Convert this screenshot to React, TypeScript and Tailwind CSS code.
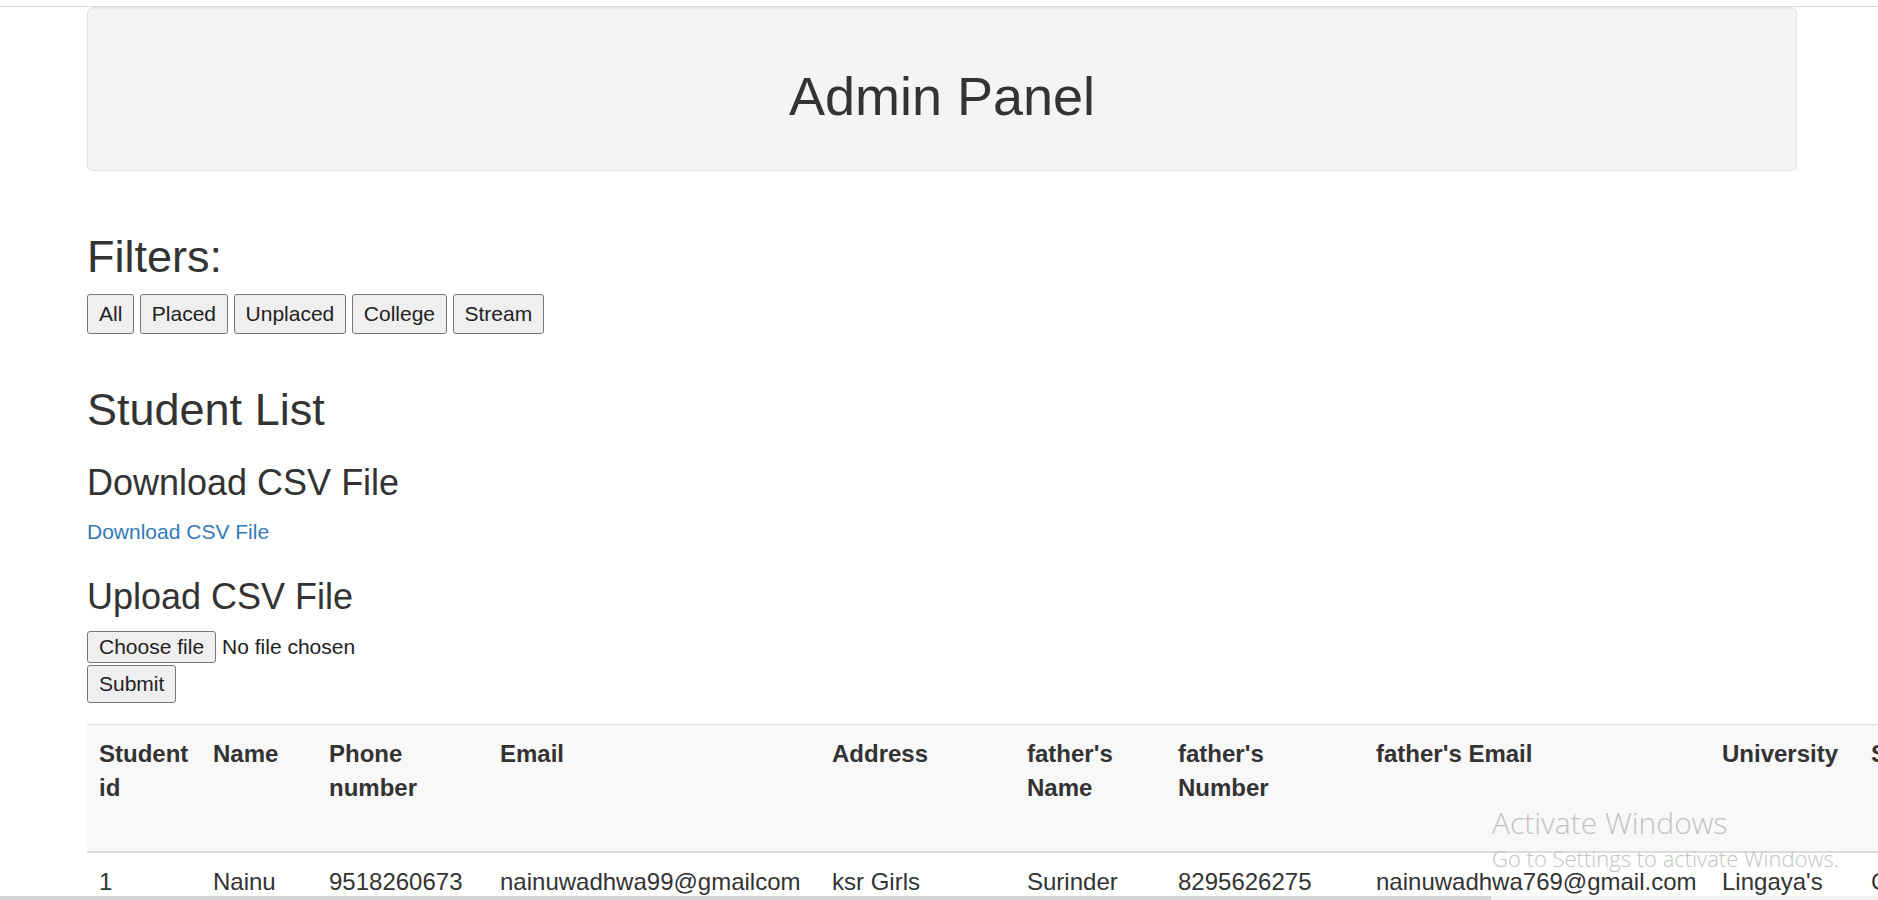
const filters = ["All", "Placed", "Unplaced", "College", "Stream"];

const columns = [
  { w: "w-[114px]", head: ["Student", "id"] },
  { w: "w-[116px]", head: ["Name"] },
  { w: "w-[171px]", head: ["Phone", "number"] },
  { w: "w-[332px]", head: ["Email"] },
  { w: "w-[195px]", head: ["Address"] },
  { w: "w-[151px]", head: ["father's", "Name"] },
  { w: "w-[198px]", head: ["father's", "Number"] },
  { w: "w-[346px]", head: ["father's Email"] },
  { w: "w-[149px]", head: ["University"] },
  { w: "w-[120px]", head: ["Stream"] },
  { w: "w-[150px]", head: ["Year of", "passing", "out"] },
  { w: "w-[150px]", head: ["Status"] },
];

const students = [
  ["1", "Nainu", "9518260673", "nainuwadhwa99@gmailcom", "ksr Girls", "Surinder", "8295626275", "nainuwadhwa769@gmail.com", "Lingaya's", "CSE", "2020", "Placed"],
  ["2", "Riya", "9812345670", "riya.sharma@gmail.com", "Sector 15", "Rakesh", "9876543210", "rakesh.sharma@gmail.com", "MDU", "ECE", "2021", "Unplaced"],
];

const Btn = ({ label, h }: { label: string; h: string }) => (
  <button className={`${h} px-[11px] border border-[#767676] rounded-[3px] bg-[#efefef] text-[21px] leading-[30px] text-[#222]`}>
    {label}
  </button>
);

export default function App() {
  return (
    <div className="relative w-full h-screen overflow-hidden bg-white font-['Liberation_Sans',Arial,sans-serif] text-[#333]">
      <div className="mt-[6px] border-t border-[#dcdcdc]">
        <div className="pl-[87px]">
          {/* header well */}
          <div className="w-[1710px] h-[164px] pt-[58px] bg-[#f4f4f4] border border-[#e3e3e3] rounded-[6px] shadow-[inset_0_1px_1px_rgba(0,0,0,0.05)]">
            <h1 className="text-center text-[54px] leading-[60px]">Admin Panel</h1>
          </div>

          <h2 className="mt-[61px] text-[45px] leading-[50px]">Filters:</h2>
          <div className="mt-[12px] flex gap-[5.5px]">
            {filters.map((f) => (
              <Btn key={f} label={f} h="h-[40px]" />
            ))}
          </div>

          <h2 className="mt-[51px] text-[45px] leading-[50px]">Student List</h2>
          <h3 className="mt-[28px] text-[36px] leading-[40px]">Download CSV File</h3>
          <a href="#" className="block mt-[14px] text-[21px] leading-[30px] text-[#337ab7] w-max">
            Download CSV File
          </a>
          <h3 className="mt-[30px] text-[36px] leading-[40px]">Upload CSV File</h3>
          <div className="mt-[14px] flex items-center gap-[6px]">
            <Btn label="Choose file" h="h-[32px]" />
            <span className="text-[21px] leading-[30px] text-[#222]">No file chosen</span>
          </div>
          <div className="mt-[2px]">
            <Btn label="Submit" h="h-[38px]" />
          </div>

          <table className="mt-[21px] table-fixed border-collapse w-max text-[24px] leading-[34px]">
            <colgroup>
              {columns.map((c, i) => (
                <col key={i} className={c.w} />
              ))}
            </colgroup>
            <thead>
              <tr className="h-[127px] bg-[#f8f8f8] border-t border-b-2 border-[#dddddd]">
                {columns.map((c, i) => (
                  <th key={i} className="p-[12px] align-top text-left font-bold">
                    {c.head.map((line, j) => (
                      <div key={j} className="whitespace-nowrap">{line}</div>
                    ))}
                  </th>
                ))}
              </tr>
            </thead>
            <tbody>
              {students.map((row) => (
                <tr key={row[0]} className="border-b border-[#dddddd]">
                  {row.map((cell, i) => (
                    <td key={i} className="p-[12px] align-top whitespace-nowrap">{cell}</td>
                  ))}
                </tr>
              ))}
            </tbody>
          </table>
        </div>
      </div>

      {/* windows watermark */}
      <div className="absolute left-[1492px] top-[808px] font-['Open_Sans',sans-serif] text-[#c3c3c3] pointer-events-none">
        <div className="text-[30px] leading-[30px] font-light">Activate Windows</div>
        <div className="mt-[9px] text-[22px] leading-[22px] font-light">Go to Settings to activate Windows.</div>
      </div>

      {/* horizontal scrollbar */}
      <div className="absolute bottom-0 left-0 w-full h-[4px] bg-[#f1f1f1]">
        <div className="w-[1491px] h-full bg-[#d4d4d4]" />
      </div>
    </div>
  );
}
